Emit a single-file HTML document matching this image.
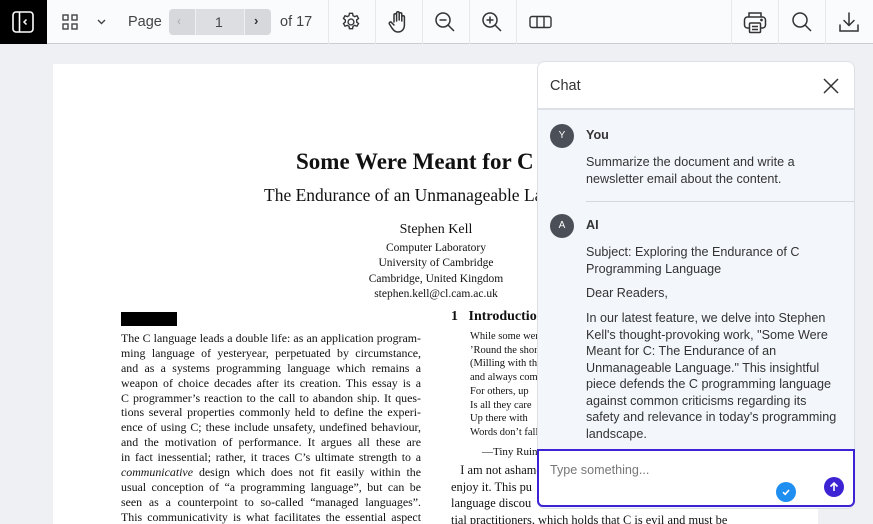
<!DOCTYPE html>
<html><head><meta charset="utf-8"><style>
*{margin:0;padding:0;box-sizing:border-box}
html,body{width:873px;height:524px;overflow:hidden}
body{background:#eef0f3;font-family:"Liberation Sans",sans-serif;position:relative}
#w{position:absolute;left:0;top:0;width:873px;height:524px;overflow:hidden}
.tb{position:absolute;left:0;top:0;width:873px;height:44px;background:#fafbfc;border-bottom:1px solid #c9ccd1}
.ab{position:absolute}
.sep{position:absolute;top:0;width:1px;height:44px;background:#e6e8eb}
svg{position:absolute}
.page{position:absolute;left:53px;top:64px;width:765px;height:460px;background:#fff}
.serif{font-family:"Liberation Serif",serif;color:#111}
.c{position:absolute;text-align:center;white-space:nowrap}
.j{position:absolute;left:121px;width:300px;font-size:11.9px;line-height:14.9px}
.j div{height:14.9px;width:300px;white-space:nowrap;text-align:justify;text-align-last:justify}
.chat{position:absolute;left:537px;top:61px;width:318px;height:448px;background:#f3f6fb;border:1px solid #dcdfe4;border-radius:8px;overflow:hidden}
.ct{font-size:12.6px;color:#333;line-height:16.5px;white-space:nowrap}
</style></head><body><div id="w">
<div class="tb">
 <div class="ab" style="left:0;top:0;width:47px;height:44px;background:#000"></div>
 <svg style="left:12px;top:11px" width="22" height="22" viewBox="0 0 22 22"><rect x="1" y="1" width="20" height="20" rx="3" fill="none" stroke="#fff" stroke-width="1.6"/><line x1="7.5" y1="1" x2="7.5" y2="21" stroke="#fff" stroke-width="1.6"/><path d="M14.5 8.5 L12 11 L14.5 13.5" fill="none" stroke="#fff" stroke-width="1.5"/></svg>
 <svg style="left:62px;top:14px" width="16" height="16" viewBox="0 0 16 16" fill="none" stroke="#444" stroke-width="1.4"><rect x="1" y="1" width="5" height="5"/><rect x="10" y="1" width="5" height="5"/><rect x="1" y="10" width="5" height="5"/><rect x="10" y="10" width="5" height="5"/></svg>
 <svg style="left:97px;top:19px" width="9" height="6" viewBox="0 0 9 6"><path d="M1 1L4.5 4.5L8 1" fill="none" stroke="#444" stroke-width="1.4"/></svg>
 <div class="ab" style="left:128px;top:14px;font-size:14.5px;color:#444">Page</div>
 <div class="ab" style="left:169px;top:9px;width:102px;height:26px;background:#d6d8db;border-radius:4px"></div>
 <div class="ab" style="left:195px;top:9px;width:50px;height:26px;background:#dcdee1;border-left:1px solid #f0f0f0;border-right:1px solid #f0f0f0"></div>
 <div class="ab" style="left:177px;top:14px;font-size:12px;color:#aaa">‹</div>
 <div class="ab" style="left:215px;top:14px;font-size:14px;color:#444">1</div>
 <div class="ab" style="left:254px;top:13px;font-size:13px;color:#333;font-weight:bold">›</div>
 <div class="ab" style="left:280px;top:14px;font-size:14.5px;color:#444">of 17</div>
 <div class="sep" style="left:328px"></div><div class="sep" style="left:375px"></div><div class="sep" style="left:422px"></div><div class="sep" style="left:469px"></div><div class="sep" style="left:516px"></div><div class="sep" style="left:731px"></div><div class="sep" style="left:778px"></div><div class="sep" style="left:825px"></div>
 <svg style="left:340px;top:11px" width="22" height="22" viewBox="0 0 24 24" fill="none" stroke="#333" stroke-width="1.5"><circle cx="12" cy="12" r="3.2"/><path d="M10.3 2.5h3.4l.5 2.6 1.8 1 2.5-.9 1.7 2.9-2 1.7v2.2l2 1.7-1.7 2.9-2.5-.9-1.8 1-.5 2.6h-3.4l-.5-2.6-1.8-1-2.5.9-1.7-2.9 2-1.7v-2.2l-2-1.7 1.7-2.9 2.5.9 1.8-1z"/></svg>
 <svg style="left:387px;top:10px" width="22" height="24" viewBox="0 0 22 24" fill="none" stroke="#333" stroke-width="1.5" stroke-linecap="round"><path d="M7 12V5a1.3 1.3 0 0 1 2.6 0v6M9.6 10V3a1.3 1.3 0 0 1 2.6 0v7M12.2 10V4a1.3 1.3 0 0 1 2.6 0v7M14.8 11V7a1.3 1.3 0 0 1 2.6 0v8c0 4-2.5 7-6.5 7-3 0-4.5-2-6-4l-2.5-4a1.3 1.3 0 0 1 2.2-1.4L7 15"/></svg>
 <svg style="left:434px;top:11px" width="22" height="22" viewBox="0 0 22 22" fill="none" stroke="#333" stroke-width="1.5"><circle cx="9" cy="9" r="7"/><path d="M14 14l6 6M5.5 9h7"/></svg>
 <svg style="left:481px;top:11px" width="22" height="22" viewBox="0 0 22 22" fill="none" stroke="#333" stroke-width="1.5"><circle cx="9" cy="9" r="7"/><path d="M14 14l6 6M5.5 9h7M9 5.5v7"/></svg>
 <svg style="left:529px;top:15px" width="23" height="14" viewBox="0 0 23 14" fill="none" stroke="#333" stroke-width="1.4"><rect x="1" y="1.5" width="21" height="11" rx="2"/><path d="M8 1.5v11M15 1.5v11"/></svg>
 <svg style="left:743px;top:11px" width="24" height="23" viewBox="0 0 24 23" fill="none" stroke="#333" stroke-width="1.5"><path d="M6 6V2h12v4"/><rect x="1.5" y="6" width="21" height="11" rx="3"/><rect x="6.5" y="12" width="11" height="9.5" rx="1" fill="#fafbfc"/><path d="M9 15.5h6M9 18.5h6"/><circle cx="18.5" cy="9" r=".6" fill="#333"/></svg>
 <svg style="left:791px;top:11px" width="22" height="22" viewBox="0 0 22 22" fill="none" stroke="#333" stroke-width="1.5"><circle cx="9" cy="9" r="7"/><path d="M14 14l6 6"/></svg>
 <svg style="left:838px;top:11px" width="22" height="22" viewBox="0 0 22 22" fill="none" stroke="#333" stroke-width="1.5" stroke-linecap="round"><path d="M11 2v12M6 9.5l5 5 5-5M2 14v6h18v-6"/></svg>
</div>

<div class="page"></div>
<div class="serif">
 <div class="c" style="left:296px;top:149px;font-size:23px;font-weight:bold">Some Were Meant for C</div>
 <div class="c" style="left:264px;top:185px;font-size:17.5px">The Endurance of an Unmanageable Language</div>
 <div class="c" style="left:336px;width:200px;top:222px;font-size:14px">Stephen Kell</div>
 <div class="c" style="left:336px;width:200px;top:241px;font-size:11.5px;line-height:15.3px">Computer Laboratory<br>University of Cambridge<br>Cambridge, United Kingdom<br>stephen.kell@cl.cam.ac.uk</div>
 <div class="ab" style="left:121px;top:312px;width:56px;height:14px;background:#000"></div>
 <div class="ab" style="left:451px;top:309px;font-size:14px;font-weight:bold;white-space:nowrap">1&nbsp;&nbsp;&nbsp;Introduction</div>
 <div class="j" style="top:331px">
  <div>The C language leads a double life: as an application program-</div>
  <div>ming language of yesteryear, perpetuated by circumstance,</div>
  <div>and as a systems programming language which remains a</div>
  <div>weapon of choice decades after its creation. This essay is a</div>
  <div>C programmer’s reaction to the call to abandon ship. It ques-</div>
  <div>tions several properties commonly held to define the experi-</div>
  <div>ence of using C; these include unsafety, undefined behaviour,</div>
  <div>and the motivation of performance. It argues all these are</div>
  <div>in fact inessential; rather, it traces C’s ultimate strength to a</div>
  <div><i>communicative</i> design which does not fit easily within the</div>
  <div>usual conception of “a programming language”, but can be</div>
  <div>seen as a counterpoint to so-called “managed languages”.</div>
  <div>This communicativity is what facilitates the essential aspect</div>
 </div>
 <div class="ab" style="left:470px;top:330px;font-size:10.5px;line-height:13.7px;white-space:nowrap">While some were meant for sea<br>’Round the shore<br>(Milling with the<br>and always coming<br>For others, up<br>Is all they care<br>Up there with<br>Words don’t fall</div>
 <div class="ab" style="left:482px;top:446px;font-size:11px;white-space:nowrap">—Tiny Ruins</div>
 <div class="ab" style="left:451px;top:462px;font-size:12.4px;line-height:16.5px;white-space:nowrap">&nbsp;&nbsp;&nbsp;I am not ashamed<br>enjoy it. This pu<br>language discou<br>tial practitioners, which holds that C is evil and must be</div>
</div>

<div class="chat">
 <div class="ab" style="left:0;top:0;width:318px;height:48px;background:#fff;border-bottom:2px solid #dde1e7"></div>
 <div class="ab" style="left:12px;top:16px;font-size:14.5px;color:#333">Chat</div>
 <svg style="left:285px;top:16px" width="16" height="16" viewBox="0 0 16 16"><path d="M1 1L15 15M15 1L1 15" stroke="#333" stroke-width="1.5"/></svg>
 <div class="ab" style="left:12px;top:62px;width:24px;height:24px;border-radius:12px;background:#4a4f58;color:#fff;font-size:10px;text-align:center;line-height:24px">Y</div>
 <div class="ab ct" style="left:48px;top:65px;font-weight:bold">You</div>
 <div class="ab ct" style="left:48px;top:92px">Summarize the document and write a<br>newsletter email about the content.</div>
 <div class="ab" style="left:48px;top:139px;width:270px;height:1px;background:#d5d9df"></div>
 <div class="ab" style="left:12px;top:152px;width:24px;height:24px;border-radius:12px;background:#4a4f58;color:#fff;font-size:10px;text-align:center;line-height:24px">A</div>
 <div class="ab ct" style="left:48px;top:155px;font-weight:bold">AI</div>
 <div class="ab ct" style="left:48px;top:182px">Subject: Exploring the Endurance of C<br>Programming Language</div>
 <div class="ab ct" style="left:48px;top:223px">Dear Readers,</div>
 <div class="ab ct" style="left:48px;top:248px">In our latest feature, we delve into Stephen<br>Kell's thought-provoking work, "Some Were<br>Meant for C: The Endurance of an<br>Unmanageable Language." This insightful<br>piece defends the C programming language<br>against common criticisms regarding its<br>safety and relevance in today's programming<br>landscape.</div>
</div>
<div class="ab" style="left:537px;top:449px;width:318px;height:58px;background:#fff;border:2px solid #3c23d4;border-radius:0 0 6px 6px"></div>
<div class="ab" style="left:550px;top:463px;font-size:12.6px;color:#777">Type something...</div>
<div class="ab" style="left:776px;top:482px;width:20px;height:20px;border-radius:10px;background:#1e8ef0"></div>
<svg style="left:781px;top:487px" width="10" height="10" viewBox="0 0 10 10"><path d="M2 5.2L4.2 7.3L8 3" fill="none" stroke="#fff" stroke-width="1.6"/></svg>
<div class="ab" style="left:824px;top:477px;width:20px;height:20px;border-radius:10px;background:#3c23d4"></div>
<svg style="left:828px;top:481px" width="12" height="12" viewBox="0 0 12 12"><path d="M6 10V2M2.5 5.5L6 2l3.5 3.5" fill="none" stroke="#fff" stroke-width="1.6"/></svg>
</div></body></html>
